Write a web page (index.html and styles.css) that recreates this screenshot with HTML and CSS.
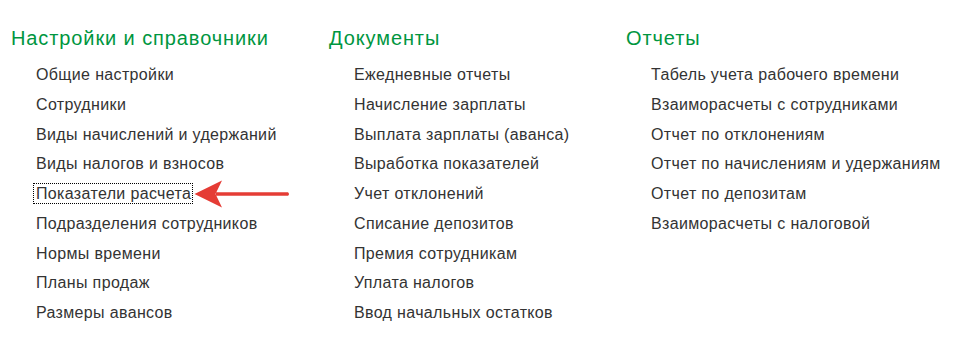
FILE: index.html
```html
<!DOCTYPE html>
<html lang="ru">
<head>
    <meta charset="UTF-8">
    <title>Зарплата - Разделы</title>
    <link rel="stylesheet" href="styles.css">
</head>
<body>
    <div class="sections">
        <div class="section">
            <h2 class="section-title">Настройки и справочники</h2>
            <ul class="section-list">
                <li class="section-item">Общие настройки</li>
                <li class="section-item">Сотрудники</li>
                <li class="section-item">Виды начислений и удержаний</li>
                <li class="section-item">Виды налогов и взносов</li>
                <li class="section-item marked">
                    <span class="focused">Показатели расчета</span>
                    <svg class="arrow" width="100" height="30" viewBox="0 0 100 30">
                        <path d="M22 13.2 L94 13.2 Q96 15 94 16.8 L22 16.8 Z" fill="#e53c35"/>
                        <path d="M0.5 15 L28 1.5 L21.5 15 L28 28.5 Z" fill="#e53c35"/>
                    </svg>
                </li>
                <li class="section-item">Подразделения сотрудников</li>
                <li class="section-item">Нормы времени</li>
                <li class="section-item">Планы продаж</li>
                <li class="section-item">Размеры авансов</li>
            </ul>
        </div>
        <div class="section">
            <h2 class="section-title">Документы</h2>
            <ul class="section-list">
                <li class="section-item">Ежедневные отчеты</li>
                <li class="section-item">Начисление зарплаты</li>
                <li class="section-item">Выплата зарплаты (аванса)</li>
                <li class="section-item">Выработка показателей</li>
                <li class="section-item">Учет отклонений</li>
                <li class="section-item">Списание депозитов</li>
                <li class="section-item">Премия сотрудникам</li>
                <li class="section-item">Уплата налогов</li>
                <li class="section-item">Ввод начальных остатков</li>
            </ul>
        </div>
        <div class="section">
            <h2 class="section-title">Отчеты</h2>
            <ul class="section-list">
                <li class="section-item">Табель учета рабочего времени</li>
                <li class="section-item">Взаиморасчеты с сотрудниками</li>
                <li class="section-item">Отчет по отклонениям</li>
                <li class="section-item">Отчет по начислениям и удержаниям</li>
                <li class="section-item">Отчет по депозитам</li>
                <li class="section-item">Взаиморасчеты с налоговой</li>
            </ul>
        </div>
    </div>
</body>
</html>
```

FILE: styles.css
```css
body {
    margin: 0;
    background: #fff;
    font-family: "Liberation Sans", Arial, sans-serif;
    color: #333;
}

.sections {
    display: grid;
    grid-template-columns: 318px 297px auto;
    padding: 26px 0 0 11px;
}

.section-title {
    margin: 0;
    font-size: 20px;
    font-weight: normal;
    line-height: 24px;
    letter-spacing: 0.9px;
    color: #00963f;
}

.section-list {
    list-style: none;
    margin: 10px 0 0 0;
    padding: 0 0 0 25px;
}

.section-item {
    height: 29.75px;
    line-height: 29.75px;
    font-size: 16px;
    letter-spacing: 0.35px;
    white-space: nowrap;
}

.marked {
    position: relative;
}

.focused {
    display: inline-block;
    line-height: 19px;
    margin-left: -3px;
    padding: 0 1px 0 2px;
    border: 1px dotted #000;
}

.arrow {
    position: absolute;
    left: 158px;
    top: 0;
}
```
